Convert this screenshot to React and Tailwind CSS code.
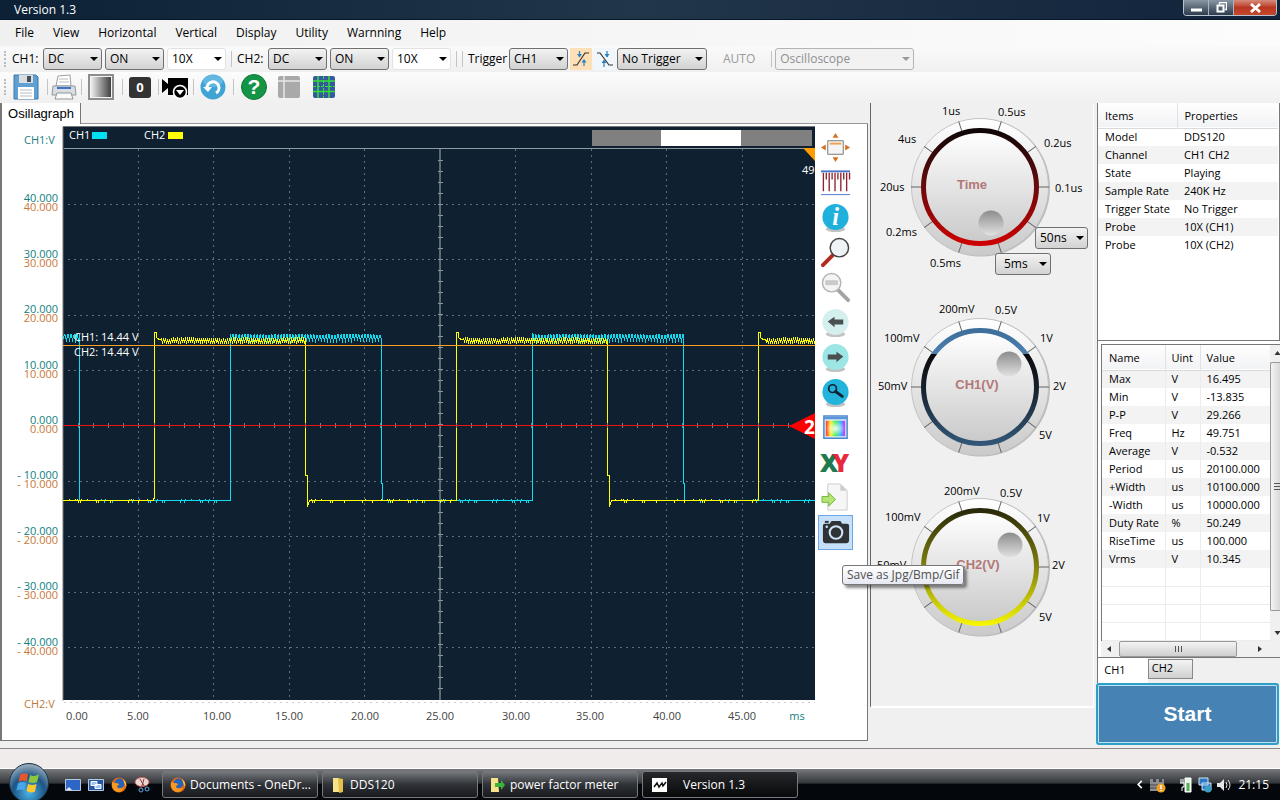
import React, { useState } from 'react';

const menus = ['File', 'View', 'Horizontal', 'Vertical', 'Display', 'Utility', 'Warnning', 'Help'];

const properties = [
  ['Model', 'DDS120'],
  ['Channel', 'CH1 CH2'],
  ['State', 'Playing'],
  ['Sample Rate', '240K Hz'],
  ['Trigger State', 'No Trigger'],
  ['Probe', '10X (CH1)'],
  ['Probe', '10X (CH2)'],
];

const measurements = [
  ['Max', 'V', '16.495'],
  ['Min', 'V', '-13.835'],
  ['P-P', 'V', '29.266'],
  ['Freq', 'Hz', '49.751'],
  ['Average', 'V', '-0.532'],
  ['Period', 'us', '20100.000'],
  ['+Width', 'us', '10100.000'],
  ['-Width', 'us', '10000.000'],
  ['Duty Rate', '%', '50.249'],
  ['RiseTime', 'us', '100.000'],
  ['Vrms', 'V', '10.345'],
  ['', '', ''],
  ['', '', ''],
  ['', '', ''],
  ['', '', ''],
];

const timeAxis = [
  ['0.00', 77], ['5.00', 138], ['10.00', 217], ['15.00', 289], ['20.00', 365],
  ['25.00', 440], ['30.00', 516], ['35.00', 590], ['40.00', 667], ['45.00', 742],
];

const voltAxis = ['40.000', '30.000', '20.000', '10.000', '0.000', '- 10.000', '- 20.000', '- 30.000', '- 40.000'];

const dials = [
  {
    id: 'time',
    title: 'Time',
    titleX: 101,
    stops: [[0, '#0c0606'], [0.5, '#6a0a0c'], [1, '#d00000']],
    knob: [120, 120],
    labels: [
      ['1us', 71, 12], ['0.5us', 127, 13], ['4us', 27, 40], ['0.2us', 173, 44], ['20us', 9, 88],
      ['0.1us', 184, 89], ['0.2ms', 15, 133], ['0.5ms', 59, 164],
    ],
  },
  {
    id: 'ch1',
    title: 'CH1(V)',
    titleX: 106,
    stops: [[0, '#3d6d98'], [0.22, '#4a80b0'], [0.22, '#0a0a0c'], [0.5, '#16212b'], [1, '#33587a']],
    knob: [138, 61],
    labels: [
      ['200mV', 68, 10], ['0.5V', 124, 11], ['100mV', 13, 39], ['1V', 169, 39], ['50mV', 7, 87],
      ['2V', 182, 87], ['5V', 168, 136],
    ],
  },
  {
    id: 'ch2',
    title: 'CH2(V)',
    titleX: 107,
    stops: [[0, '#26260a'], [0.5, '#828210'], [1, '#f8f800']],
    knob: [139, 62],
    labels: [
      ['200mV', 73, 12], ['0.5V', 129, 14], ['100mV', 14, 38], ['1V', 166, 39], ['50mV', 6, 86],
      ['2V', 181, 86], ['5V', 168, 138],
    ],
  },
];

function Select({ label, options, className = '', plain, disabled }) {
  const look = disabled
    ? 'border-[#b4b4b4] bg-[#f2f2f2] text-[#8f8f8f]'
    : plain
      ? 'border-[#e2e2e2] bg-white text-black'
      : 'border-[#707070] bg-linear-to-b from-[#f3f3f3] to-[#d2d2d2] text-black';
  return (
    <span className={`relative block h-[22px] shrink-0 ${className}`}>
      <select
        aria-label={label}
        disabled={disabled}
        className={`block h-full w-full appearance-none rounded-[3px] border pl-1 pr-4 text-xs leading-4 opacity-100 ${look}`}
      >
        {options.map((o) => (
          <option key={o}>{o}</option>
        ))}
      </select>
      <svg viewBox="0 0 8 4" className={`pointer-events-none absolute right-1 top-[9px] h-1 w-2 ${disabled ? 'text-[#999]' : 'text-black'}`}>
        <path d="M0 0h8L4 4z" fill="currentColor" />
      </svg>
    </span>
  );
}

function Separator() {
  return <span className="h-4 w-px shrink-0 bg-[#c4c4c4]" />;
}

function Grip() {
  return <span className="h-4 w-0 shrink-0 border-l-2 border-dotted border-[#bbb]" />;
}

function TitleBar() {
  return (
    <header className="flex h-5 items-start justify-between border-b border-[#0a1726] bg-linear-to-r from-[#0d2136] via-[#22364a] to-[#10233a] pr-[3px]">
      <h1 className="pl-[14px] text-xs leading-5 text-white">Version 1.3</h1>
      <div className="flex h-4 overflow-hidden rounded-b-[4px] border border-t-0 border-[#b9c3cd]">
        <button aria-label="Minimize" className="flex w-[25px] items-center justify-center border-r border-[#aab4be] bg-linear-to-b from-[#8a96a2] to-[#2c3c4e]">
          <svg viewBox="0 0 11 9" className="h-[9px] w-[11px]"><path d="M0 5.500h11v3H0z" fill="#fff" /></svg>
        </button>
        <button aria-label="Restore" className="flex w-[25px] items-center justify-center border-r border-[#aab4be] bg-linear-to-b from-[#8a96a2] to-[#2c3c4e]">
          <svg viewBox="0 0 11 11" className="h-[11px] w-[11px]" fill="none" stroke="#fff">
            <path d="M3.500 2.500v-2h7v7h-2" strokeWidth="1.300" />
            <path d="M1.500 3.500h6v6h-6z" strokeWidth="2" />
          </svg>
        </button>
        <button aria-label="Close" className="flex w-[42px] items-center justify-center bg-linear-to-b from-[#d58a7c] via-[#b8361f] to-[#c5482e]">
          <svg viewBox="0 0 11 10" className="h-[10px] w-[11px]"><path d="M1 1l9 8M10 1L1 9" stroke="#fff" strokeWidth="2.800" /></svg>
        </button>
      </div>
    </header>
  );
}

function MenuBar() {
  return (
    <nav className="flex h-[26px] items-center gap-[19px] bg-linear-to-r from-[#f0f0f0] to-[#fcfcfc] pl-[15px] text-xs">
      {menus.map((m) => (
        <button key={m}>{m}</button>
      ))}
    </nav>
  );
}

function ChannelBar() {
  return (
    <div className="flex h-[26px] items-center bg-linear-to-b from-[#fafafa] to-[#f0f0f0] pl-1 text-xs">
      <Grip />
      <span className="ml-[6px] w-[31px]">CH1:</span>
      <div className="flex gap-[3px]">
        <Select label="CH1 coupling" options={['DC', 'AC']} className="w-[59px]" />
        <Select label="CH1 state" options={['ON', 'OFF']} className="w-[59px]" />
        <Select label="CH1 probe" options={['10X', '1X']} className="w-[59px]" plain />
      </div>
      <span className="w-[5px]" />
      <Separator />
      <span className="ml-[5px] w-[31px]">CH2:</span>
      <div className="flex gap-[3px]">
        <Select label="CH2 coupling" options={['DC', 'AC']} className="w-[59px]" />
        <Select label="CH2 state" options={['ON', 'OFF']} className="w-[59px]" />
        <Select label="CH2 probe" options={['10X', '1X']} className="w-[59px]" plain />
      </div>
      <div className="mx-[5px] flex gap-[5px]">
        <Separator />
        <Separator />
      </div>
      <span className="w-[41px]">Trigger</span>
      <Select label="Trigger source" options={['CH1', 'CH2']} className="w-[59px]" />
      <button aria-label="Rising edge" className="ml-[2px] flex h-[22px] w-[22px] items-center justify-center bg-[#fde0b8]">
        <svg viewBox="0 0 18 16" className="h-4 w-[18px]" fill="none">
          <path d="M1 14h4L13 2h4" stroke="#333" strokeWidth="1.200" />
          <path d="M7.500 0v6M12 15V9" stroke="#2f7fb8" strokeWidth="1.200" />
          <path d="M5 3h5L7.500 6.500zM9.500 11.500h5L12 8z" fill="#2f7fb8" />
        </svg>
      </button>
      <button aria-label="Falling edge" className="mx-[2px] flex h-[22px] w-[21px] items-center justify-center bg-[#f0f6fb]">
        <svg viewBox="0 0 18 16" className="h-4 w-[18px]" fill="none">
          <path d="M1 2h3l9 12h4" stroke="#333" strokeWidth="1.200" />
          <path d="M11 0v6M8 16v-6" stroke="#2f7fb8" strokeWidth="1.200" />
          <path d="M8.500 3h5L11 6.500zM5.500 12h5L8 8.500z" fill="#2f7fb8" />
        </svg>
      </button>
      <Select label="Trigger mode" options={['No Trigger', 'Auto']} className="w-[90px]" />
      <button disabled className="ml-4 mr-4 text-[#9a9a9a]">AUTO</button>
      <Separator />
      <Select label="Mode" options={['Oscilloscope']} className="ml-[3px] w-[139px]" disabled />
    </div>
  );
}

function ToolButton({ label, className = '', children }) {
  return (
    <button aria-label={label} className={`shrink-0 ${className}`}>
      <svg viewBox="0 0 26 26" className="h-[26px] w-[26px] overflow-visible">{children}</svg>
    </button>
  );
}

function IconBar() {
  return (
    <div className="flex h-[31px] items-center bg-linear-to-b from-[#fcfcfc] to-[#f0f0f0] pb-[2px] pl-1">
      <Grip />
      <ToolButton label="Save" className="ml-[7px] mr-2">
        <path d="M1 1h22l2 2v22H1z" fill="#5f9fd2" stroke="#3d78a8" />
        <path d="M6 1h14v8H6z" fill="#d8dde2" />
        <path d="M14 2h4v6h-4z" fill="#46505a" />
        <path d="M5 13h16v12H5z" fill="#fff" />
        <path d="M7 16h12M7 19h12M7 22h12" stroke="#b9bec4" />
      </ToolButton>
      <Separator />
      <ToolButton label="Print" className="ml-[3px] mr-1">
        <path d="M7 2l12-1 1 11H5z" fill="#fff" stroke="#9aa0a6" />
        <path d="M8 5h9M8 8h10" stroke="#b9bec4" />
        <path d="M2 12h22l1 9H1z" fill="#d9dce0" stroke="#92979c" />
        <path d="M6 14h14" stroke="#3f73c4" strokeWidth="2" />
        <path d="M6 19h14l2 6H4z" fill="#fafafa" stroke="#92979c" />
      </ToolButton>
      <Separator />
      <ToolButton label="Contrast" className="ml-[6px] mr-2">
        <defs>
          <linearGradient id="grayRamp">
            <stop offset="0" stopColor="#efefef" />
            <stop offset="1" stopColor="#3f3f3f" />
          </linearGradient>
        </defs>
        <path d="M1 1h24v24H1z" fill="#f4f4f4" stroke="#8d8d8d" strokeWidth="2" />
        <path d="M3 3h20v20H3z" fill="url(#grayRamp)" />
      </ToolButton>
      <Separator />
      <ToolButton label="Zero" className="ml-1 mr-[5px]">
        <rect x="2" y="3" width="22" height="21" rx="3" fill="#333" />
        <text x="13" y="18" textAnchor="middle" fontSize="13" fontWeight="700" fill="#fff">0</text>
      </ToolButton>
      <Separator />
      <ToolButton label="Record" className="ml-[3px] mr-[5px]">
        <path d="M0 5l6 5V4h20v17H6v-7l-6 5z" fill="#000" />
        <circle cx="18" cy="18" r="6.500" fill="#000" stroke="#fff" strokeWidth="1.600" />
        <path d="M14 16h8l-4 5z" fill="#fff" />
      </ToolButton>
      <Separator />
      <ToolButton label="Refresh" className="ml-[6px] mr-[7px]">
        <circle cx="13" cy="13" r="12.500" fill="#3fa3d6" />
        <ellipse cx="13" cy="7" rx="10" ry="6" fill="#7cc4e8" opacity=".6" />
        <path d="M7 14a6 6 0 1 1 9 5" fill="none" stroke="#fff" strokeWidth="3" />
        <path d="M3 13h9l-4 5z" fill="#fff" />
      </ToolButton>
      <Separator />
      <ToolButton label="Help" className="ml-[7px] mr-[9px]">
        <circle cx="13" cy="13" r="12.500" fill="#149447" stroke="#0b7a36" />
        <text x="13" y="20" textAnchor="middle" fontFamily='"Liberation Sans", sans-serif' fontSize="21" fontWeight="700" fill="#fff">?</text>
      </ToolButton>
      <ToolButton label="Table" className="mr-[9px]">
        <rect x="2" y="2" width="22" height="22" rx="2" fill="#a9a9a9" />
        <path d="M2 7h22M8 2v22" stroke="#e6e6e6" strokeWidth="1.500" />
      </ToolButton>
      <ToolButton label="Grid">
        <rect x="2" y="2" width="22" height="22" rx="2" fill="#3558a0" />
        <path d="M2 7h22M2 17.500h22M7 2v22M18 2v22" stroke="#35e035" strokeWidth="1.500" />
        <path d="M2 12.500h22M12.500 2v22" stroke="#35e035" strokeDasharray="3 1" />
      </ToolButton>
    </div>
  );
}

// small repeatable ripple so that the traces keep their shape between renders
function ripple(from, to, low, high, period) {
  let d = '';
  for (let x = from; x <= to; x += 1) {
    const n = (x * 37 + ((x * x) % 11)) % 5;
    const down = x % period === 0;
    d += ` L${x}.5 ${(down ? low - (n % 3) : high + (n % 2)) + 0.5}`;
  }
  return d;
}

// quiet level with a short spike every now and then
function idle(from, to, level, every) {
  let d = '';
  for (let x = from; x <= to; x += 1) {
    const spike = (x * 7 + ((x * x) % 13)) % every === 0;
    d += ` V${level}.5 H${x}.5`;
    if (spike) d += ` v${x % 2 ? -2 : 2}`;
  }
  return d;
}

const ch1Trace =
  'M63 339' + ripple(64, 79, 343, 334, 3) + ' V500' + idle(80, 230, 500, 4) +
  ' V334' + ripple(231, 381, 342, 334, 3) + ' V483 H382.500 V500' + idle(383, 532, 500, 4) +
  ' V334' + ripple(533, 683, 342, 334, 3) + ' V483 H684.500 V500' + idle(685, 815, 500, 4);

const ch2Trace =
  'M63 500.500' + idle(64, 153, 500, 6) + ' H154.500 V332.500 H156.500 V337.500 L160 340' + ripple(161, 305, 343, 338, 2) +
  ' V475 H307.500 V507 L309 502' + idle(311, 455, 500, 6) +
  ' H456.500 V332.500 H458.500 V337.500 L462 340' + ripple(463, 607, 343, 338, 2) +
  ' V475 H609.500 V507 L611 502' + idle(613, 757, 500, 6) +
  ' H758.500 V332.500 H760.500 V337.500 L764 340' + ripple(765, 815, 343, 338, 2);

function Scope() {
  const columns = [138, 213, 289, 364, 515, 591, 666, 742];
  const rows = [204, 259, 315, 370, 481, 536, 592, 647];
  const centerTicks = Array.from({ length: 49 }, (_, i) => 160 + i * 11);
  const zeroTicks = Array.from({ length: 49 }, (_, i) => Math.round(78 + i * 15.1));
  return (
    <svg viewBox="2 126 815 612" className="block h-auto min-w-0 flex-1" fontSize="11" fontFamily='"Open Sans", sans-serif'>
      <defs>
        <clipPath id="plot"><path d="M63 126h752v574H63z" /></clipPath>
      </defs>
      <path d="M63 126h752v574H63z" fill="#0f2030" />
      <path d="M63 700.500V126.500H815" fill="none" stroke="#777" />
      <path d="M64 148.500H815" stroke="#8d99a5" />
      <g stroke="#5f6d79" strokeDasharray="2 4" shapeRendering="crispEdges">
        {columns.map((x) => <path key={x} d={`M${x + 0.5} 149V700`} />)}
        {rows.map((y) => <path key={y} d={`M68 ${y + 0.5}H815`} />)}
      </g>
      <path d="M64 702.500H815" stroke="#ccc" strokeDasharray="2 4" />
      <path d="M440 149V700" stroke="#5d6973" strokeWidth="2" />
      {centerTicks.map((y) => <path key={y} d={`M438 ${y + 0.5}h5`} stroke="#8a949d" />)}

      <g clipPath="url(#plot)" shapeRendering="crispEdges">
        <path d={ch1Trace} fill="none" stroke="#10dcf0" />
        <path d={ch2Trace} fill="none" stroke="#ffff00" />
        <path d="M63 345h752v1H63z" fill="#ffa020" />
        <path d="M63 425h752v1H63z" fill="#f01010" />
        {zeroTicks.map((x) => <path key={x} d={`M${x + 0.5} 423v2M${x + 0.5} 426v2`} stroke="#8f8080" />)}
      </g>
      <g clipPath="url(#plot)">
        <path d="M803 148h12v13z" fill="#ff9c00" />
        <text x="802" y="174" fill="#fff">49</text>
        <path d="M789 426l26-13v26z" fill="#f00" />
        <text x="804" y="434" fontSize="19" fontWeight="700" fill="#fff">2</text>
      </g>

      <g fill="#fff">
        <text x="69" y="139">CH1</text>
        <text x="144" y="139">CH2</text>
        <text x="74" y="341">CH1: 14.44 V</text>
        <text x="74" y="356">CH2: 14.44 V</text>
      </g>
      <path d="M92 132h15v7H92z" fill="#00e0f0" />
      <path d="M168 132h15v7h-15z" fill="#ff0" />
      <path d="M592 130h220v16H592z" fill="#808080" />
      <path d="M661 130h80v16h-80z" fill="#fff" />

      <text x="24" y="144" fill="#1d8080">CH1:V</text>
      <text x="24" y="708" fill="#c07a38">CH2:V</text>
      {voltAxis.map((v, i) => {
        const y = Math.round(204.4 + i * 55.4);
        return (
          <g key={v} textAnchor="end">
            <text x="58" y={y - 2} fill="#0f7f80">{v}</text>
            <text x="58" y={y + 7} fill="#c87838">{v}</text>
          </g>
        );
      })}
      <g fill="#444" textAnchor="middle">
        {timeAxis.map(([t, x]) => <text key={t} x={x} y="720">{t}</text>)}
        <text x="797" y="720" fill="#0f7f80">ms</text>
      </g>
    </svg>
  );
}

function Magnifier({ rim, glass, handle, flip, minus }) {
  return (
    <g transform={flip ? 'translate(32 0) scale(-1 1)' : undefined}>
      <path d="M18 18l11 11" stroke={handle} strokeWidth="4" strokeLinecap="round" />
      <circle cx="12" cy="11" r="9.500" fill={glass} stroke={rim} strokeWidth="1.500" />
      {minus && <path d="M6 9h12v4H6z" fill="#ccc" stroke="#aaa" strokeWidth=".5" />}
    </g>
  );
}

function Ball({ color, children }) {
  return (
    <>
      <ellipse cx="16" cy="28" rx="10" ry="3" fill="#999" opacity=".6" />
      <circle cx="16" cy="15.500" r="13.500" fill={color} />
      {children}
    </>
  );
}

const sideTools = [
  ['Fit window', (
    <>
      <path d="M8 9h16v14H8z" fill="#f4f4f4" stroke="#777" />
      <path d="M10 12h12" stroke="#f0a050" strokeWidth="2" />
      <path d="M13 6l3-5 3 5zM13 26h6l-3 5zM6 13v6l-5-3zM26 13v6l5-3z" fill="#d87020" />
    </>
  )],
  ['Sampling', (
    <>
      <path d="M1 4.500h30" stroke="#4a78c8" strokeWidth="2" />
      <path d="M1 28.500h30" stroke="#4a78c8" />
      <path d="M3.500 6v19M9.500 6v19M15.500 6v19M21.500 6v19M27.500 6v19M6.500 6v7M12.500 6v7M18.500 6v7M24.500 6v7M30.500 6v7" stroke="#8c2430" strokeWidth="1.400" />
    </>
  )],
  ['Information', (
    <Ball color="#1fb0dc">
      <text x="16" y="24" textAnchor="middle" fontFamily='"Liberation Serif", serif' fontSize="25" fontStyle="italic" fontWeight="700" fill="#fff">i</text>
    </Ball>
  )],
  ['Zoom in', (
    <Magnifier key="in" flip rim="#444" glass="#eef3f5" handle="#b02a20" />
  )],
  ['Zoom out', <Magnifier key="out" minus rim="#b4b4b4" glass="#f4f4f4" handle="#a4a4a4" />],
  ['Previous', <Ball key="l" color="#d5efef"><path d="M8 15l7-5v3h9v5h-9v3z" fill="#4a4f50" /></Ball>],
  ['Next', <Ball key="r" color="#9ce6e6"><path d="M24 15l-7-5v3H8v5h9v3z" fill="#4a4f50" /></Ball>],
  ['Search', (
    <Ball color="#22b4dc">
      <circle cx="13" cy="12" r="4" fill="none" stroke="#123" strokeWidth="1.800" />
      <path d="M16 15l7 5" stroke="#123" strokeWidth="3" strokeLinecap="round" />
    </Ball>
  )],
  ['Colors', (
    <>
      <defs>
        <linearGradient id="hue">
          <stop offset="0" stopColor="#f33" />
          <stop offset=".25" stopColor="#fe3" />
          <stop offset=".5" stopColor="#3e5" />
          <stop offset=".75" stopColor="#3bf" />
          <stop offset="1" stopColor="#c3f" />
        </linearGradient>
        <radialGradient id="glow">
          <stop offset="0" stopColor="#fff" stopOpacity=".9" />
          <stop offset="1" stopColor="#fff" stopOpacity="0" />
        </radialGradient>
      </defs>
      <path d="M4 4h24v23H4z" fill="#dcebfa" stroke="#4a86c8" strokeWidth="1.500" />
      <path d="M4 6h24" stroke="#5b96d8" strokeWidth="3" />
      <path d="M6 9h20v16H6z" fill="url(#hue)" />
      <path d="M6 9h20v16H6z" fill="url(#glow)" />
    </>
  )],
  ['XY mode', (
    <g fontSize="26" fontWeight="800" fontFamily='"Open Sans", sans-serif'>
      <text x="0" y="26" fill="#1f7a50">X</text>
      <text x="13" y="26" fill="#e8283c">Y</text>
    </g>
  )],
  ['Export', (
    <>
      <path d="M8 2h13l7 7v20H8z" fill="#f6f6f6" stroke="#ccc" />
      <path d="M21 2v7h7z" fill="#ccc" />
      <path d="M2 15h7v-4l7 7-7 7v-4H2z" fill="#b4e474" stroke="#74b838" />
    </>
  )],
  ['Save as Jpg/Bmp/Gif', (
    <>
      <path d="M5 7h5l2-3h9l2 3h5q2 0 2 2v15q0 3-3 3H6q-3 0-3-3V9q0-2 2-2z" fill="#2f3236" />
      <path d="M5 4h4v2H5z" fill="#2f3236" />
      <circle cx="16.500" cy="16" r="6.500" fill="none" stroke="#cfe4f8" strokeWidth="2.200" />
      <circle cx="7" cy="10" r="1.300" fill="#cfe4f8" />
    </>
  )],
];

function SideTools() {
  return (
    <div className="flex w-9 shrink-0 flex-col pl-px pt-1">
      {sideTools.map(([label, icon]) => {
        const active = label.startsWith('Save as');
        return (
          <div key={label} className="relative">
            <button
              aria-label={label}
              className={`flex h-[35px] w-full items-center justify-center border ${active ? 'border-[#6ba6e8] bg-[#c6e0fa]' : 'border-transparent'}`}
            >
              <svg viewBox="0 0 32 32" className="h-[31px] w-[31px] overflow-visible">{icon}</svg>
            </button>
            {active && (
              <div role="tooltip" className="absolute left-6 top-[50px] z-10 whitespace-nowrap rounded-[3px] border border-[#777] bg-linear-to-b from-white to-[#e6e8f2] px-1 text-xs leading-[18px] text-[#505050] shadow-[3px_3px_3px_rgba(0,0,0,0.45)]">
                {label}
              </div>
            )}
          </div>
        );
      })}
    </div>
  );
}

function Dial({ dial }) {
  const ticks = [0, 36, 72, 108, 144, 180, 216, 252, 288, 324];
  return (
    <svg viewBox="0 0 222 180" className="block w-full overflow-visible" fontSize="11" role="img" aria-label={dial.title}>
      <defs>
        <linearGradient id={`ring-${dial.id}`} x1="0" y1="25" x2="0" y2="143" gradientUnits="userSpaceOnUse">
          {dial.stops.map(([at, color], i) => <stop key={i} offset={at} stopColor={color} />)}
        </linearGradient>
        <linearGradient id={`rim-${dial.id}`} x1="0" y1="0" x2="0" y2="1">
          <stop offset="0" stopColor="#fff" />
          <stop offset="1" stopColor="#cacaca" />
        </linearGradient>
        <linearGradient id={`face-${dial.id}`} x1="0" y1="0" x2="0" y2="1">
          <stop offset="0" stopColor="#fff" />
          <stop offset="1" stopColor="#c9c9c9" />
        </linearGradient>
        <linearGradient id={`knob-${dial.id}`} x1="0" y1="0" x2="0" y2="1">
          <stop offset="0" stopColor="#8c8c8c" />
          <stop offset="1" stopColor="#e2e2e2" />
        </linearGradient>
      </defs>
      <circle cx="110" cy="84.500" r="69" fill="#b8b8b8" />
      <circle cx="109" cy="84" r="68.500" fill={`url(#rim-${dial.id})`} stroke="#c4c4c4" />
      {ticks.map((a) => <path key={a} d="M167 84h11" stroke="#666" transform={`rotate(${a} 109 84)`} />)}
      <circle cx="109" cy="84" r="56.500" fill={`url(#face-${dial.id})`} stroke={`url(#ring-${dial.id})`} strokeWidth="5" />
      <circle cx={dial.knob[0]} cy={dial.knob[1]} r="12.500" fill={`url(#knob-${dial.id})`} />
      <text x={dial.titleX} y="86" textAnchor="middle" fontFamily='"Liberation Sans", sans-serif' fontSize="13" fontWeight="700" fill="#b27878">
        {dial.title}
      </text>
      {dial.labels.map(([t, x, y]) => <text key={t} x={x} y={y}>{t}</text>)}
    </svg>
  );
}

function DialPanel() {
  return (
    <section className="mb-10 ml-[2px] w-[224px] shrink-0 border-b-2 border-l border-r border-b-white border-l-[#666] border-r-white">
      <div className="relative mb-5">
        <Dial dial={dials[0]} />
        <Select label="Fast time base" options={['50ns']} className="absolute! left-[164px] top-[124px] w-[53px]" />
        <Select label="Slow time base" options={['5ms']} className="absolute! left-[124px] top-[150px] w-[56px] [&>select]:pl-2" />
      </div>
      <Dial dial={dials[1]} />
      <Dial dial={dials[2]} />
    </section>
  );
}

function PropertyTable() {
  return (
    <div className="h-[238px] border-b border-l border-r border-[#777] bg-white pr-px">
      <table className="w-full border-collapse text-left text-[11px]">
        <thead>
          <tr className="h-[25px] border-b border-[#d8dade] bg-linear-to-b from-white to-[#f2f3f5]">
            <th className="w-[79px] border-r border-[#e0e2e6] pl-[7px] pt-px font-normal">Items</th>
            <th className="pl-[7px] pt-px font-normal">Properties</th>
          </tr>
        </thead>
        <tbody>
          {properties.map(([name, value], i) => (
            <tr key={i} className="h-[18px] odd:bg-white even:bg-[#f3f3f3]">
              <td className="whitespace-nowrap pl-[7px]">{name}</td>
              <td className="whitespace-nowrap pl-[7px]">{value}</td>
            </tr>
          ))}
        </tbody>
      </table>
    </div>
  );
}

function MeasurePanel() {
  const [tab, setTab] = useState('CH1');
  return (
    <div className="border-l border-[#777] bg-white pt-[3px]">
      <div className="ml-[3px] flex border-l border-t border-[#777]">
        <table className="flex-1 table-fixed border-collapse text-left text-[11px]">
          <thead>
            <tr className="h-[25px] border-b border-[#d8dade] bg-linear-to-b from-white to-[#f2f3f5]">
              <th className="w-[63px] border-r border-[#e0e2e6] pl-[7px] pt-px font-normal">Name</th>
              <th className="w-[35px] border-r border-[#e0e2e6] pl-[6px] pt-px font-normal">Uint</th>
              <th className="pl-[6px] pt-px font-normal">Value</th>
            </tr>
          </thead>
          <tbody>
            {measurements.map(([name, unit, value], i) => (
              <tr key={i} className={`h-[18px] ${name ? 'odd:bg-[#f3f3f3]' : 'border-b border-[#ececec]'}`}>
                <td className="whitespace-nowrap border-r border-[#ececec] pl-[7px]">{name}</td>
                <td className="border-r border-[#ececec] pl-[6px]">{unit}</td>
                <td className="pl-[6px]">{value}</td>
              </tr>
            ))}
          </tbody>
        </table>
        <div className="flex w-[10px] shrink-0 flex-col items-center bg-[#f0f0f0]">
          <svg viewBox="0 0 9 17" className="h-[17px] w-full"><path d="M4 10l3-4 3 4z" fill="#333" /></svg>
          <div className="flex w-full flex-1 flex-col items-end justify-center gap-[2px] rounded-l-[2px] border border-r-0 border-[#999] bg-linear-to-r from-[#f4f4f4] to-[#d8d8d8]">
            <span className="h-px w-[6px] bg-[#555]" />
            <span className="h-px w-[6px] bg-[#555]" />
            <span className="h-px w-[6px] bg-[#555]" />
          </div>
          <svg viewBox="0 0 9 30" className="h-[30px] w-full"><path d="M4 20h6l-3 4z" fill="#333" /></svg>
        </div>
      </div>
      <div className="ml-[3px] flex h-4 items-stretch bg-[#f0f0f0]">
        <svg viewBox="0 0 18 16" className="h-4 w-[18px]"><path d="M10 5v6L6 8z" fill="#333" /></svg>
        <div className="flex w-[118px] items-center justify-center gap-[2px] rounded-[2px] border border-[#999] bg-linear-to-b from-[#f4f4f4] to-[#cfcfcf]">
          <span className="h-[6px] w-px bg-[#555]" />
          <span className="h-[6px] w-px bg-[#555]" />
          <span className="h-[6px] w-px bg-[#555]" />
        </div>
        <svg viewBox="0 0 17 16" className="ml-auto mr-3 h-4 w-[17px]"><path d="M7 5v6l4-3z" fill="#333" /></svg>
      </div>
      <div className="flex h-[26px] items-start border-t border-[#777] bg-[#f0f0f0] text-[11px]" role="tablist">
        {['CH1', 'CH2'].map((name) => (
          <button
            key={name}
            role="tab"
            aria-selected={tab === name}
            onClick={() => setTab(name)}
            className={tab === name ? 'h-[25px] w-[50px] bg-white pr-4' : 'mt-px h-5 w-[45px] border border-[#888] bg-linear-to-b from-[#f4f4f4] to-[#d0d0d0] pr-4'}
          >
            {name}
          </button>
        ))}
      </div>
    </div>
  );
}

function Orb() {
  return (
    <button aria-label="Start menu" className="-mt-1 ml-[9px] shrink-0">
      <svg viewBox="0 0 40 40" className="h-10 w-10">
        <defs>
          <radialGradient id="orb" cx=".5" cy=".75" r=".7">
            <stop offset="0" stopColor="#4ab4e8" />
            <stop offset=".6" stopColor="#1c5484" />
            <stop offset="1" stopColor="#8fa6b8" />
          </radialGradient>
        </defs>
        <circle cx="20" cy="20" r="19.500" fill="url(#orb)" stroke="#1a2f42" />
        <path d="M11 12q4-3 8-.500l-1.500 7q-4-2-8 .500z" fill="#e8562c" />
        <path d="M21 12q4 2 9-.500L28 19q-4 2-8.500 0z" fill="#8cc63e" />
        <path d="M9 20.500q4-2.500 8-.500l-1.500 7.500q-4-2-8 0z" fill="#48a8ec" />
        <path d="M19 21q4 2 8.500 0L26 28.500q-4 2-8.500-.500z" fill="#fcc830" />
      </svg>
    </button>
  );
}

function Firefox() {
  return (
    <svg viewBox="0 0 16 16" className="h-4 w-4 shrink-0">
      <circle cx="8" cy="8" r="7.500" fill="#e66a14" />
      <circle cx="8.500" cy="6.500" r="5" fill="#2a62b8" />
      <path d="M1 5q2 1 4 1 3 0 3 2-2 0-2 2 2 3 7 0-2 5-6 5-5-1-6-6z" fill="#f49a20" />
      <path d="M12 2q4 3 3 8-2-4-3-8z" fill="#fcc93a" />
    </svg>
  );
}

function Folder() {
  return (
    <svg viewBox="0 0 16 16" className="h-4 w-4 shrink-0">
      <path d="M3 1h6l1 14H3z" fill="#f6e38a" />
      <path d="M8 1l5 1v13l-4 1z" fill="#e2c04c" />
    </svg>
  );
}

function Task({ icon, children, active }) {
  return (
    <button
      className={`flex h-[27px] min-w-0 max-w-[156px] flex-1 items-center gap-1 rounded-[3px] border border-[#77797c] px-[7px] text-xs text-white ${
        active ? 'bg-linear-to-b from-[#26282b] to-[#08090b]' : 'bg-linear-to-b from-[#75787b] via-[#303338] to-[#17191c]'
      }`}
    >
      {icon}
      <span className={active ? 'whitespace-nowrap pl-[11px]' : 'whitespace-nowrap'}>{children}</span>
    </button>
  );
}

function Taskbar() {
  return (
    <footer className="flex h-[31px] items-center bg-linear-to-b from-[#77797c] from-0% via-[#34373b] via-45% to-[#04080c] to-50% text-xs text-white">
      <Orb />
      <div className="ml-4 flex items-center gap-[7px]">
        <button aria-label="Show desktop">
          <svg viewBox="0 0 16 14" className="h-[14px] w-4">
            <path d="M.5 1.500h15v11H.5z" fill="#2e66c8" stroke="#b8c8dc" />
            <path d="M1 12l3-3 3 3z" fill="#dfe8f0" />
          </svg>
        </button>
        <button aria-label="Switch windows">
          <svg viewBox="0 0 16 14" className="h-[14px] w-4">
            <path d="M.5 1.500h15v11H.5z" fill="#2458a4" stroke="#b8c8dc" />
            <path d="M3 3.500h6v4H3zM7 6.500h6v4H7z" fill="#9cc4f0" stroke="#fff" />
          </svg>
        </button>
        <button aria-label="Firefox"><Firefox /></button>
        <button aria-label="Snipping tool">
          <svg viewBox="0 0 16 16" className="h-4 w-4">
            <ellipse cx="8" cy="5" rx="7" ry="4.500" fill="#e8d8d8" stroke="#c86050" />
            <path d="M6 2l6 10M10 2L7 12" stroke="#8a3030" />
            <circle cx="7" cy="13" r="2" fill="none" stroke="#58a8e8" />
            <circle cx="13" cy="12" r="2" fill="none" stroke="#58a8e8" />
          </svg>
        </button>
      </div>
      <div className="ml-3 flex min-w-0 flex-1 gap-1">
        <Task icon={<Firefox />}>Documents - OneDr...</Task>
        <Task icon={<Folder />}>DDS120</Task>
        <Task
          icon={
            <svg viewBox="0 0 16 16" className="h-4 w-4 shrink-0">
              <path d="M1 1h7l1 14H1z" fill="#f6e38a" />
              <path d="M5 6h6V3l4 5-4 5v-3H5z" fill="#3cb43c" />
            </svg>
          }
        >
          power factor meter
        </Task>
        <Task
          active
          icon={
            <svg viewBox="0 0 16 16" className="ml-[2px] h-4 w-4 shrink-0">
              <path d="M0 1h15v14H0z" fill="#fff" />
              <path d="M2 10l3-4 2 4 3-4 1 3 3-4" fill="none" stroke="#111" strokeWidth="1.500" />
            </svg>
          }
        >
          Version 1.3
        </Task>
      </div>
      <div className="flex shrink-0 items-center pr-[11px]">
        <svg viewBox="0 0 6 10" className="mr-[6px] h-[9px] w-[6px]"><path d="M5 1L1 5l4 4" fill="none" stroke="#fff" strokeWidth="1.800" /></svg>
        <svg viewBox="0 0 18 16" className="mr-3 h-4 w-[18px]">
          <path d="M1 2h3v3h3V2h3v3h3V2h2v12H1z" fill="#8a8e92" />
          <path d="M1 8h12M1 11h12" stroke="#444" />
          <circle cx="12" cy="11" r="4.500" fill="#f0a020" />
          <path d="M12 8v4M12 13v1" stroke="#fff" strokeWidth="1.500" />
        </svg>
        <svg viewBox="0 0 16 16" className="mr-[2px] h-4 w-4">
          <path d="M6 1h6v14H6z" fill="#e8f4e8" stroke="#fff" />
          <path d="M7.500 6h3v8h-3z" fill="#54b054" />
          <path d="M2 2v4M4 2v4M1 6h4v4H3v4" fill="none" stroke="#fff" />
        </svg>
        <svg viewBox="0 0 16 16" className="mr-[3px] h-4 w-4">
          <path d="M2 1h9v7H2zM5 6h9v7H5z" fill="#2c78c8" stroke="#d4e4f4" />
          <circle cx="11" cy="12" r="3.500" fill="#38a0c8" />
        </svg>
        <svg viewBox="0 0 16 16" className="mr-[6px] h-4 w-4">
          <path d="M1 6h3l4-4v12l-4-4H1z" fill="#e4e4e4" />
          <path d="M10 5q2 3 0 6M12 3q4 5 0 10" fill="none" stroke="#e4e4e4" />
        </svg>
        <time>21:15</time>
      </div>
    </footer>
  );
}

function App() {
  return (
    <div className="flex min-h-screen flex-col bg-[#f0f0f0] font-['Open_Sans',sans-serif] text-black">
      <TitleBar />
      <MenuBar />
      <ChannelBar />
      <IconBar />
      <main className="flex flex-1">
        <section className="flex min-w-0 flex-1 flex-col pb-[7px]">
          <div className="flex h-[21px]" role="tablist">
            <button role="tab" aria-selected="true" className="w-[81px] border-l-2 border-r border-[#777] bg-white font-['Liberation_Sans',sans-serif] text-[13px] leading-5">
              Osillagraph
            </button>
            <span className="flex-1 border-b border-[#999]" />
          </div>
          <div className="flex flex-1 items-start border-b border-l-2 border-r border-[#777] bg-white pr-[14px] pt-[2px]">
            <Scope />
            <SideTools />
          </div>
        </section>
        <DialPanel />
        <aside className="ml-[3px] w-[183px] shrink-0">
          <PropertyTable />
          <MeasurePanel />
          <button className="-ml-px block h-[62px] w-[183px] rounded-[3px] border-2 border-[#2ea0c8] bg-[#4682b4] font-['Liberation_Sans',sans-serif] text-[21px] font-bold text-white shadow-[inset_0_0_0_1px_#b8e4f4]">
            Start
          </button>
        </aside>
      </main>
      <div className="h-[21px] border-b border-t border-b-white border-t-[#888] bg-[#f0eceb]" />
      <Taskbar />
    </div>
  );
}

export default App;
